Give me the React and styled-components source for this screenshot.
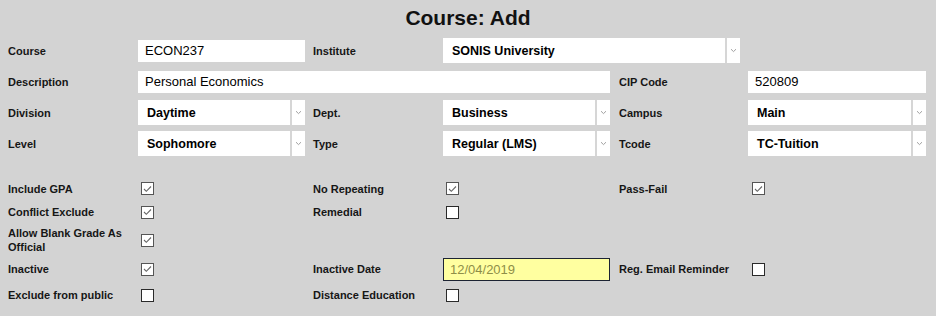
import styled, { createGlobalStyle } from "styled-components";

const GlobalStyle = createGlobalStyle`
  html, body {
    margin: 0;
    padding: 0;
    background: #d3d3d3;
  }
  body {
    font-family: "Liberation Sans", Arial, sans-serif;
    color: #161616;
  }
`;

const Page = styled.div`
  width: 936px;
  height: 316px;
  background: #d3d3d3;
  overflow: hidden;
`;

const Title = styled.h1`
  margin: 0;
  height: 35px;
  line-height: 35px;
  text-align: center;
  font-size: 21px;
  font-weight: 700;
  color: #111;
`;

const FieldGrid = styled.div`
  display: grid;
  grid-template-columns: 138px 167px 138px 167px 138px 178px;
  grid-auto-rows: 31px;
  align-items: center;
`;

const CheckGrid = styled.div`
  display: grid;
  grid-template-columns: 138px 167px 138px 167px 138px 178px;
  grid-template-rows: 23px 24px 32px 26px 26px;
  align-items: center;
  margin-top: 18px;
`;

const Label = styled.label`
  padding-left: ${(p) => (p.$third ? "9px" : "8px")};
  padding-right: 6px;
  font-size: 11px;
  font-weight: 700;
  line-height: 14px;
  color: #161616;
`;

const TextInput = styled.div`
  grid-column: ${(p) => p.$span || "auto"};
  height: 22px;
  box-sizing: border-box;
  background: #fff;
  padding-left: 7px;
  font-size: 13px;
  line-height: 22px;
  color: #000;
  white-space: nowrap;
  overflow: hidden;
`;

const DateInput = styled.div`
  width: 100%;
  height: 23px;
  box-sizing: border-box;
  background: #ffffa0;
  border: 1px solid #1c2333;
  padding-left: 6px;
  font-size: 13px;
  line-height: 21px;
  color: #8e8e48;
`;

const Select = styled.div`
  display: flex;
  height: 25px;
  width: ${(p) => (p.$width ? `${p.$width}px` : "auto")};
  background: #fff;
`;

const SelectValue = styled.div`
  flex: 1;
  padding-left: 9px;
  font-size: 12.5px;
  font-weight: 700;
  line-height: 26px;
  color: #000;
  white-space: nowrap;
  overflow: hidden;
`;

const SelectArrow = styled.div`
  width: 13px;
  border-left: 2px solid #d6d6d6;
  display: flex;
  align-items: center;
  justify-content: center;
`;

const Box = styled.span`
  display: inline-flex;
  align-items: center;
  justify-content: center;
  width: 13px;
  height: 13px;
  box-sizing: border-box;
  margin-left: ${(p) => (p.$third ? "4px" : "3px")};
  background: #fff;
  border: 1px solid ${(p) => (p.$checked ? "#555" : "#2a2a2a")};
`;

const Cell = styled.div`
  grid-column: ${(p) => p.$col};
  display: flex;
  align-items: center;
`;

const Chevron = () => (
  <svg width="7" height="5" viewBox="0 0 7 5">
    <path d="M1 1.2 L3.5 3.6 L6 1.2" fill="none" stroke="#a0a0a0" strokeWidth="1" />
  </svg>
);

const Dropdown = ({ value, width }) => (
  <Select $width={width}>
    <SelectValue>{value}</SelectValue>
    <SelectArrow>
      <Chevron />
    </SelectArrow>
  </Select>
);

const Check = ({ checked, third }) => (
  <Box $checked={checked} $third={third}>
    {checked && (
      <svg width="9" height="8" viewBox="0 0 9 8">
        <path d="M1 4 L3.3 6.3 L8 1.5" fill="none" stroke="#666" strokeWidth="1.1" />
      </svg>
    )}
  </Box>
);

const checkRows = [
  [
    { label: "Include GPA", checked: true },
    { label: "No Repeating", checked: true },
    { label: "Pass-Fail", checked: true },
  ],
  [
    { label: "Conflict Exclude", checked: true },
    { label: "Remedial", checked: false },
    null,
  ],
  [{ label: "Allow Blank Grade As Official", checked: true }, null, null],
  [
    { label: "Inactive", checked: true },
    { label: "Inactive Date", date: "12/04/2019" },
    { label: "Reg. Email Reminder", checked: false },
  ],
  [
    { label: "Exclude from public", checked: false },
    { label: "Distance Education", checked: false },
    null,
  ],
];

export default function App() {
  return (
    <Page>
      <GlobalStyle />
      <Title>Course: Add</Title>
      <FieldGrid>
        <Label>Course</Label>
        <TextInput>ECON237</TextInput>
        <Label>Institute</Label>
        <Cell $col="4 / span 2">
          <Dropdown value="SONIS University" width={297} />
        </Cell>
        <div />

        <Label>Description</Label>
        <TextInput $span="2 / span 3">Personal Economics</TextInput>
        <Label $third>CIP Code</Label>
        <TextInput>520809</TextInput>

        <Label>Division</Label>
        <Dropdown value="Daytime" />
        <Label>Dept.</Label>
        <Dropdown value="Business" />
        <Label $third>Campus</Label>
        <Dropdown value="Main" />

        <Label>Level</Label>
        <Dropdown value="Sophomore" />
        <Label>Type</Label>
        <Dropdown value="Regular (LMS)" />
        <Label $third>Tcode</Label>
        <Dropdown value="TC-Tuition" />
      </FieldGrid>

      <CheckGrid>
        {checkRows.map((row, r) =>
          row.map((item, c) =>
            item
              ? [
                  <Label key={`l${r}${c}`} $third={c === 2}>
                    {item.label}
                  </Label>,
                  <Cell key={`v${r}${c}`} $col={c * 2 + 2}>
                    {item.date ? (
                      <DateInput>{item.date}</DateInput>
                    ) : (
                      <Check checked={item.checked} third={c === 2} />
                    )}
                  </Cell>,
                ]
              : [<div key={`a${r}${c}`} />, <div key={`b${r}${c}`} />]
          )
        )}
      </CheckGrid>
    </Page>
  );
}
